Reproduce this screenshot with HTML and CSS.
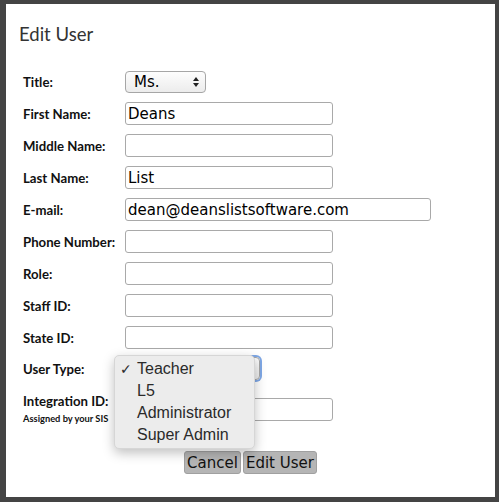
FILE: index.html
```html
<!DOCTYPE html>
<html lang="en">
<head>
    <meta charset="UTF-8">
    <title>Edit User</title>
    <link rel="stylesheet" href="styles.css">
</head>
<body>
    <div class="modal">
        <h1 class="modal-title">Edit User</h1>
        <form class="user-form">
            <div class="row">
                <label class="label">Title:</label>
                <div class="fake-select title-select">
                    <span>Ms.</span>
                    <svg class="arrows" width="6" height="10" viewBox="0 0 6 10"><path d="M3 0 L6 4 L0 4 Z M0 6 L6 6 L3 10 Z" fill="#222"/></svg>
                </div>
            </div>
            <div class="row">
                <label class="label">First Name:</label>
                <input class="field" type="text" value="Deans">
            </div>
            <div class="row">
                <label class="label">Middle Name:</label>
                <input class="field" type="text">
            </div>
            <div class="row">
                <label class="label">Last Name:</label>
                <input class="field" type="text" value="List">
            </div>
            <div class="row">
                <label class="label">E-mail:</label>
                <input class="field field-wide" type="text" value="dean@deanslistsoftware.com">
            </div>
            <div class="row">
                <label class="label">Phone Number:</label>
                <input class="field" type="text">
            </div>
            <div class="row">
                <label class="label">Role:</label>
                <input class="field" type="text">
            </div>
            <div class="row">
                <label class="label">Staff ID:</label>
                <input class="field" type="text">
            </div>
            <div class="row">
                <label class="label">State ID:</label>
                <input class="field" type="text">
            </div>
            <div class="row row-type">
                <label class="label">User Type:</label>
                <div class="type-wrap">
                    <div class="fake-select type-select"></div>
                    <ul class="dropdown">
                        <li><span class="check">&#10003;</span>Teacher</li>
                        <li>L5</li>
                        <li>Administrator</li>
                        <li>Super Admin</li>
                    </ul>
                </div>
            </div>
            <div class="row row-integration">
                <div class="label">
                    <div>Integration ID:</div>
                    <div class="hint">Assigned by your SIS</div>
                </div>
                <input class="field" type="text">
            </div>
            <div class="actions">
                <button type="button" class="btn">Cancel</button>
                <button type="button" class="btn">Edit User</button>
            </div>
        </form>
    </div>
</body>
</html>
```

FILE: styles.css
```css
body {
    margin: 0;
    padding: 0;
    background-color: #444;
    font-family: 'Lato', sans-serif;
    color: #111;
}
.modal {
    background-color: #fff;
    margin: 4px 4px 0 6px;
    height: 493px;
    padding-top: 18px;
    box-sizing: border-box;
}
.modal-title {
    margin: 0 0 0 13px;
    font-size: 18.5px;
    font-weight: normal;
    line-height: 24px;
    color: #333;
}
.user-form {
    margin: 24px 0 0 17px;
}
.row {
    display: flex;
    align-items: center;
    height: 23px;
    margin-bottom: 9px;
}
.label {
    width: 102px;
    flex: none;
    font-size: 13.2px;
    font-weight: bold;
}
.field {
    width: 208px;
    height: 23px;
    box-sizing: border-box;
    border: 1px solid #a9a9a9;
    border-radius: 3px;
    padding: 0 2px;
    margin: 0;
    font-family: 'DejaVu Sans', sans-serif;
    font-size: 15px;
    color: #000;
}
.field-wide {
    width: 306px;
}
.fake-select {
    box-sizing: border-box;
    border: 1px solid #a6a6a6;
    border-radius: 4px;
    background: linear-gradient(#fdfdfd, #ececec);
}
.title-select {
    width: 81px;
    height: 22px;
    display: flex;
    align-items: center;
    justify-content: space-between;
    padding: 0 6px 0 8px;
    font-family: 'DejaVu Sans', sans-serif;
    font-size: 15px;
    color: #000;
}
.title-select .arrows {
    display: block;
}
.row-type {
    margin-top: -1px;
    margin-bottom: 18px;
}
.type-wrap {
    position: relative;
}
.type-select {
    width: 135px;
    height: 23px;
    box-shadow: 0 0 0 2px #7fa8e6;
}
.dropdown {
    position: absolute;
    left: -11px;
    top: -2px;
    width: 141px;
    margin: 0;
    padding: 2px 0;
    list-style: none;
    box-sizing: border-box;
    background-color: #ececec;
    border: 1px solid #d6d6d6;
    border-radius: 5px;
    box-shadow: 0 4px 12px rgba(0, 0, 0, 0.25);
    font-family: 'Liberation Sans', sans-serif;
    font-size: 16px;
    color: #2a2a2a;
}
.dropdown li {
    position: relative;
    height: 22px;
    line-height: 22px;
    padding-left: 22px;
}
.check {
    position: absolute;
    left: 5px;
    font-size: 14px;
    font-family: 'DejaVu Sans', sans-serif;
}
.row-integration {
    align-items: flex-start;
    height: auto;
    margin-bottom: 27px;
}
.row-integration .label {
    margin-top: -5px;
}
.hint {
    font-size: 9.3px;
    margin-top: 4px;
}
.actions {
    display: flex;
    justify-content: center;
    gap: 2px;
    margin-left: -17px;
}
.btn {
    height: 23px;
    padding: 0 2px;
    margin: 0;
    border: 1px solid #a0a0a0;
    border-radius: 3px;
    background-color: #b5b5b5;
    font-family: 'DejaVu Sans', sans-serif;
    font-size: 15px;
    color: #111;
}
```
